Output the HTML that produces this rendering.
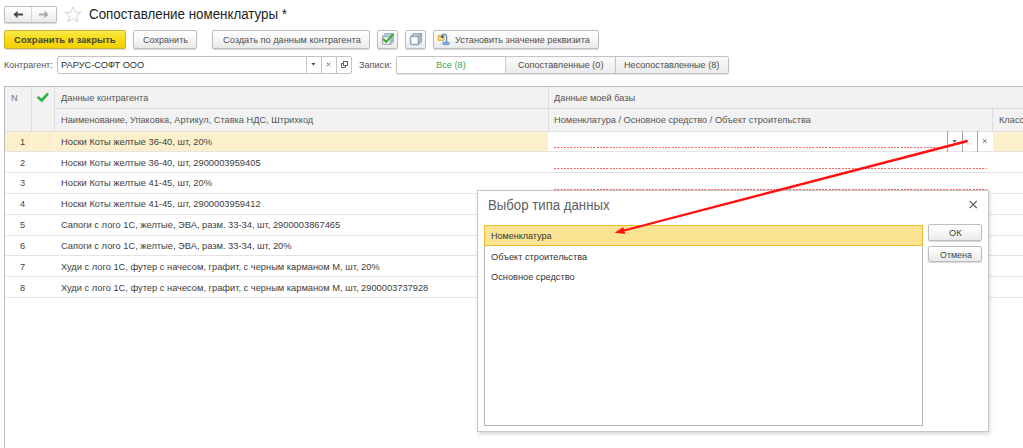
<!DOCTYPE html>
<html><head><meta charset="utf-8">
<style>
*{margin:0;padding:0;box-sizing:border-box}
html,body{width:1023px;height:448px;overflow:hidden;background:#fff;font-family:"Liberation Sans",sans-serif}
.a{position:absolute}
.t{position:absolute;white-space:nowrap;line-height:1;transform-origin:0 0}
.btn{position:absolute;border:1px solid #bdbdbd;border-radius:2px;background:linear-gradient(#ffffff,#f6f6f6 50%,#e9e9e9);box-shadow:0 1px 1px rgba(0,0,0,.16)}
.dash{position:absolute;height:1px;background:repeating-linear-gradient(90deg,#f46a6a 0 2px,#fbd0d0 2px 2.3px,transparent 2.3px 3.27px)}
</style></head><body>
<div class="btn" style="left:4px;top:6px;width:53px;height:17px"></div>
<div class="a" style="left:31px;top:7px;width:1px;height:15px;background:#d9d9d9"></div>
<svg class="a" style="left:0;top:0" width="100" height="30" viewBox="0 0 100 30">
  <path d="M13.3 14.5 L17.6 10.8 L17.6 13.4 L23 13.4 L23 15.6 L17.6 15.6 L17.6 18.2 Z" fill="#4a4a4a"/>
  <path d="M48.7 14.5 L44.4 10.8 L44.4 13.4 L39 13.4 L39 15.6 L44.4 15.6 L44.4 18.2 Z" fill="#a9a9a9"/>
  <path d="M73 6.9 L75.2 12.2 L80.9 12.5 L76.5 16.2 L78 21.7 L73 18.6 L68 21.7 L69.5 16.2 L65.1 12.5 L70.8 12.2 Z" fill="none" stroke="#c2c8ce" stroke-width="0.8" stroke-linejoin="round"/>
</svg>
<div class="t" style="left:88.80px;top:7px;font-size:14px;color:#1e1e1e;transform:scaleX(0.9529)">Сопоставление номенклатуры *</div>
<div class="a" style="left:4px;top:30px;width:122px;height:19px;border:1px solid #cdb22e;border-radius:2px;background:linear-gradient(#fbe84a,#f7dc12 50%,#f1d000);box-shadow:0 1px 1px rgba(0,0,0,.15)"></div>
<div class="t" style="left:14.20px;top:35px;font-size:9.7px;color:#48463a;transform:scaleX(0.9872);font-weight:bold">Сохранить и закрыть</div>
<div class="btn" style="left:133px;top:30px;width:64px;height:19px"></div>
<div class="t" style="left:142.70px;top:35px;font-size:9.7px;color:#4d4d4d;transform:scaleX(0.9348)">Сохранить</div>
<div class="btn" style="left:212px;top:30px;width:158px;height:19px"></div>
<div class="t" style="left:222.50px;top:35px;font-size:9.7px;color:#4d4d4d;transform:scaleX(0.9506)">Создать по данным контрагента</div>
<div class="btn" style="left:377px;top:30px;width:21px;height:19px"></div>
<div class="btn" style="left:405px;top:30px;width:21px;height:19px"></div>
<div class="btn" style="left:433px;top:30px;width:166px;height:19px"></div>
<div class="t" style="left:454.50px;top:35px;font-size:9.7px;color:#4d4d4d;transform:scaleX(0.9439)">Установить значение реквизита</div>
<svg class="a" style="left:370px;top:28px" width="90" height="22" viewBox="370 28 90 22">
  <path d="M382.6 36.6 L385.6 33.7 L393.4 33.7 L390.4 36.6 Z" fill="#c3d0da" stroke="#9cb0bf" stroke-width="1.3" stroke-linejoin="round"/>
  <path d="M390.4 36.6 L393.4 33.7 L393.4 41.5 L390.4 44.4 Z" fill="#aebfcc" stroke="#9cb0bf" stroke-width="1.3" stroke-linejoin="round"/>
  <rect x="382.6" y="36.6" width="7.8" height="7.8" rx="1.2" fill="#fbfcfd" stroke="#9cb0bf" stroke-width="1.4"/>
  <path d="M383.8 39.5 L386.3 41.9 L392.5 34.8" fill="none" stroke="#3fae2c" stroke-width="2.2" stroke-linecap="round" stroke-linejoin="round"/>
  <path d="M410.6 36.6 L413.6 33.6 L421.4 33.6 L418.4 36.6 Z" fill="#c3d0da" stroke="#93a8b8" stroke-width="1.3" stroke-linejoin="round"/>
  <path d="M418.4 36.6 L421.4 33.6 L421.4 41.5 L418.4 44.5 Z" fill="#aebfcc" stroke="#93a8b8" stroke-width="1.3" stroke-linejoin="round"/>
  <rect x="410.6" y="36.6" width="7.8" height="7.9" rx="1.2" fill="#fff" stroke="#93a8b8" stroke-width="1.5"/>
  <rect x="438.2" y="35.2" width="6" height="5.4" rx="0.6" fill="#f2c04a" stroke="#e3a73a" stroke-width="0.8"/>
  <rect x="439" y="37.6" width="4.4" height="2.2" fill="#fbe08c"/>
  <path d="M441.8 37 Q442.4 34 444.4 34.1 Q446.6 34.3 446.6 37 L446.6 42.6" fill="none" stroke="#5a8fc4" stroke-width="1.3"/>
  <ellipse cx="446" cy="43.4" rx="3.8" ry="1.4" fill="#7eaede" stroke="#5a8fc4" stroke-width="0.7"/>
  <path d="M442.4 35.2 L443.9 36.7 L442.4 38.2 L440.9 36.7 Z" fill="#204f88"/>
</svg>
<div class="t" style="left:4.40px;top:60px;font-size:9.7px;color:#555;transform:scaleX(0.9227)">Контрагент:</div>
<div class="a" style="left:57px;top:56px;width:295px;height:18px;border:1px solid #c3c3c3;border-radius:2px;background:#fff"></div>
<div class="a" style="left:306px;top:57px;width:1px;height:16px;background:#c6c6c6"></div>
<div class="a" style="left:321px;top:57px;width:1px;height:16px;background:#c6c6c6"></div>
<div class="a" style="left:336px;top:57px;width:1px;height:16px;background:#c6c6c6"></div>
<div class="t" style="left:60.70px;top:60px;font-size:9.7px;color:#2e2e2e;transform:scaleX(0.9536)">РАРУС-СОФТ ООО</div>
<svg class="a" style="left:300px;top:54px" width="60" height="22" viewBox="300 54 60 22">
  <path d="M311.4 63.1 L315.4 63.1 L313.4 65.6 Z" fill="#444"/>
  <path d="M326.6 62.6 L330.3 66.1 M330.3 62.6 L326.6 66.1" stroke="#7a7a7a" stroke-width="1"/>
  <rect x="343.5" y="61.5" width="4" height="4" fill="#fff" stroke="#555" stroke-width="0.9"/>
  <path d="M343.5 63.5 L341.5 63.5 L341.5 67.5 L345.5 67.5 L345.5 65.5" fill="none" stroke="#555" stroke-width="0.9"/>
</svg>
<div class="t" style="left:359.20px;top:60px;font-size:9.7px;color:#555;transform:scaleX(0.9414)">Записи:</div>
<div class="a" style="left:396px;top:56px;width:333px;height:18px;border:1px solid #c3c3c3;border-radius:2px;background:linear-gradient(#fafafa,#ececec);box-shadow:0 1px 1px rgba(0,0,0,.12)"></div>
<div class="a" style="left:397px;top:57px;width:108px;height:16px;background:#fff"></div>
<div class="a" style="left:505px;top:57px;width:1px;height:16px;background:#c6c6c6"></div>
<div class="a" style="left:615px;top:57px;width:1px;height:16px;background:#c6c6c6"></div>
<div class="t" style="left:436.14px;top:60px;font-size:9.7px;color:#3aa656;transform:scaleX(0.9520)">Все (8)</div>
<div class="t" style="left:517.60px;top:60px;font-size:9.7px;color:#4d4d4d;transform:scaleX(0.9372)">Сопоставленные (0)</div>
<div class="t" style="left:623.70px;top:60px;font-size:9.7px;color:#4d4d4d;transform:scaleX(0.9393)">Несопоставленные (8)</div>
<div class="a" style="left:4px;top:86px;width:1030px;height:380px;border:1px solid #bcbcbc;background:#fff"></div>
<div class="a" style="left:5px;top:87px;width:1020px;height:44px;background:#f2f2f2"></div>
<div class="a" style="left:55px;top:108px;width:970px;height:1px;background:#dadada"></div>
<div class="a" style="left:5px;top:131px;width:1020px;height:1px;background:#e2e2e2"></div>
<div class="a" style="left:31px;top:87px;width:1px;height:44px;background:#dcdcdc"></div>
<div class="a" style="left:54px;top:87px;width:1px;height:44px;background:#dcdcdc"></div>
<div class="a" style="left:548px;top:87px;width:1px;height:44px;background:#dcdcdc"></div>
<div class="a" style="left:992px;top:109px;width:1px;height:22px;background:#dcdcdc"></div>
<div class="t" style="left:10.70px;top:93px;font-size:9.7px;color:#777;transform:scaleX(0.9520)">N</div>
<svg class="a" style="left:34px;top:89px" width="18" height="16" viewBox="0 0 18 16"><path d="M4.4 8.6 L7.6 11.5 L13.3 5.3" fill="none" stroke="#2fb44c" stroke-width="2.7" stroke-linecap="round" stroke-linejoin="round"/></svg>
<div class="t" style="left:60.90px;top:93px;font-size:9.7px;color:#555;transform:scaleX(0.9520)">Данные контрагента</div>
<div class="t" style="left:60.70px;top:115px;font-size:9.7px;color:#555;transform:scaleX(0.9520)">Наименование, Упаковка, Артикул, Ставка НДС, Штрихкод</div>
<div class="t" style="left:554.00px;top:93px;font-size:9.7px;color:#555;transform:scaleX(0.9520)">Данные моей базы</div>
<div class="t" style="left:554.00px;top:115px;font-size:9.7px;color:#555;transform:scaleX(0.9520)">Номенклатура / Основное средство / Объект строительства</div>
<div class="t" style="left:998.50px;top:115px;font-size:9.7px;color:#555;transform:scaleX(0.9520)">Классификатор</div>
<div class="a" style="left:5px;top:132px;width:543px;height:19px;background:#fcf0cc"></div>
<div class="a" style="left:993px;top:132px;width:40px;height:19px;background:#fcf0cc"></div>
<div class="a" style="left:31px;top:132px;width:1px;height:19px;background:#fdf6e2"></div>
<div class="a" style="left:54px;top:132px;width:1px;height:19px;background:#fdf6e2"></div>
<div class="a" style="left:5px;top:151px;width:1020px;height:1px;background:#e4e4e4"></div>
<div class="t" style="left:19.87px;top:137px;font-size:9.7px;color:#444;transform:scaleX(0.9520)">1</div>
<div class="t" style="left:61.10px;top:137px;font-size:9.7px;color:#3d3d3d;transform:scaleX(0.9600)">Носки Коты желтые 36-40, шт, 20%</div>
<div class="a" style="left:5px;top:172px;width:1020px;height:1px;background:#e4e4e4"></div>
<div class="t" style="left:19.87px;top:158px;font-size:9.7px;color:#444;transform:scaleX(0.9520)">2</div>
<div class="t" style="left:61.10px;top:158px;font-size:9.7px;color:#3d3d3d;transform:scaleX(0.9600)">Носки Коты желтые 36-40, шт, 2900003959405</div>
<div class="a" style="left:5px;top:193px;width:1020px;height:1px;background:#e4e4e4"></div>
<div class="t" style="left:19.87px;top:178px;font-size:9.7px;color:#444;transform:scaleX(0.9520)">3</div>
<div class="t" style="left:61.10px;top:178px;font-size:9.7px;color:#3d3d3d;transform:scaleX(0.9600)">Носки Коты желтые 41-45, шт, 20%</div>
<div class="a" style="left:5px;top:214px;width:1020px;height:1px;background:#e4e4e4"></div>
<div class="t" style="left:19.87px;top:199px;font-size:9.7px;color:#444;transform:scaleX(0.9520)">4</div>
<div class="t" style="left:61.10px;top:199px;font-size:9.7px;color:#3d3d3d;transform:scaleX(0.9600)">Носки Коты желтые 41-45, шт, 2900003959412</div>
<div class="a" style="left:5px;top:235px;width:1020px;height:1px;background:#e4e4e4"></div>
<div class="t" style="left:19.87px;top:220px;font-size:9.7px;color:#444;transform:scaleX(0.9520)">5</div>
<div class="t" style="left:61.10px;top:220px;font-size:9.7px;color:#3d3d3d;transform:scaleX(0.9600)">Сапоги с лого 1С, желтые, ЭВА, разм. 33-34, шт, 2900003867465</div>
<div class="a" style="left:5px;top:255px;width:1020px;height:1px;background:#e4e4e4"></div>
<div class="t" style="left:19.87px;top:241px;font-size:9.7px;color:#444;transform:scaleX(0.9520)">6</div>
<div class="t" style="left:61.10px;top:241px;font-size:9.7px;color:#3d3d3d;transform:scaleX(0.9600)">Сапоги с лого 1С, желтые, ЭВА, разм. 33-34, шт, 20%</div>
<div class="a" style="left:5px;top:276px;width:1020px;height:1px;background:#e4e4e4"></div>
<div class="t" style="left:19.87px;top:262px;font-size:9.7px;color:#444;transform:scaleX(0.9520)">7</div>
<div class="t" style="left:61.10px;top:262px;font-size:9.7px;color:#3d3d3d;transform:scaleX(0.9600)">Худи с лого 1С, футер с начесом, графит, с черным карманом М, шт, 20%</div>
<div class="a" style="left:5px;top:297px;width:1020px;height:1px;background:#e4e4e4"></div>
<div class="t" style="left:19.87px;top:283px;font-size:9.7px;color:#444;transform:scaleX(0.9520)">8</div>
<div class="t" style="left:61.10px;top:283px;font-size:9.7px;color:#3d3d3d;transform:scaleX(0.9600)">Худи с лого 1С, футер с начесом, графит, с черным карманом М, шт, 2900003737928</div>
<div class="dash" style="left:554px;top:147px;width:393px"></div>
<div class="dash" style="left:554px;top:168px;width:433px"></div>
<div class="a" style="left:947px;top:131px;width:1px;height:21px;background:#a6a6a6"></div>
<div class="a" style="left:962px;top:131px;width:1px;height:21px;background:#a6a6a6"></div>
<div class="a" style="left:977px;top:131px;width:1px;height:21px;background:#a6a6a6"></div>
<svg class="a" style="left:940px;top:131px" width="53" height="21" viewBox="0 0 53 21"><path d="M12.3 9.3 L16.7 9.3 L14.5 11.6 Z" fill="#444"/><rect x="27.2" y="12.4" width="0.9" height="0.9" fill="#999"/><rect x="29" y="12.4" width="0.9" height="0.9" fill="#999"/><rect x="30.9" y="12.4" width="0.9" height="0.9" fill="#999"/><path d="M42.9 8.3 L46.5 11.9 M46.5 8.3 L42.9 11.9" stroke="#666" stroke-width="1"/></svg>
<div class="a" style="left:477px;top:190px;width:512px;height:242px;border:1px solid #c6c6c6;background:#fff;box-shadow:1px 2px 4px rgba(0,0,0,.16)"></div>
<div class="t" style="left:487.50px;top:198px;font-size:14px;color:#606060;transform:scaleX(0.9430)">Выбор типа данных</div>
<svg class="a" style="left:966px;top:197px" width="15" height="15" viewBox="0 0 15 15"><path d="M3.6 3.9 L10.8 11.1 M10.8 3.9 L3.6 11.1" stroke="#555" stroke-width="1.1"/></svg>
<div class="a" style="left:484px;top:225px;width:439px;height:201px;border:1px solid #b4b4b4;background:#fff"></div>
<div class="a" style="left:484px;top:225px;width:439px;height:21px;border:1px solid #ecbd2c;background:#fce394"></div>
<div class="t" style="left:490.60px;top:231px;font-size:9.7px;color:#333;transform:scaleX(0.9306)">Номенклатура</div>
<div class="t" style="left:490.60px;top:252px;font-size:9.7px;color:#333;transform:scaleX(0.9520)">Объект строительства</div>
<div class="t" style="left:490.60px;top:272px;font-size:9.7px;color:#333;transform:scaleX(0.9520)">Основное средство</div>
<div class="btn" style="left:928px;top:224px;width:54px;height:17px"></div>
<div class="t" style="left:949.03px;top:228px;font-size:9.7px;color:#444;transform:scaleX(0.9520)">ОК</div>
<div class="btn" style="left:928px;top:246px;width:54px;height:16px"></div>
<div class="t" style="left:939.75px;top:250px;font-size:9.7px;color:#444;transform:scaleX(0.9178)">Отмена</div>
<div class="dash" style="left:554px;top:189px;width:433px"></div>
<svg class="a" style="left:0;top:0" width="1023" height="448" viewBox="0 0 1023 448">
  <path d="M966.16 139.89 L621.76 230.08 L622.24 231.92 L966.84 142.51 Z" fill="#ff0f0f"/><circle cx="966.5" cy="141.2" r="1.35" fill="#ff0f0f"/>
  <path d="M614.6 232.8 L623.3 227 L625.2 234 Z" fill="#ff0f0f"/>
</svg>
</body></html>
